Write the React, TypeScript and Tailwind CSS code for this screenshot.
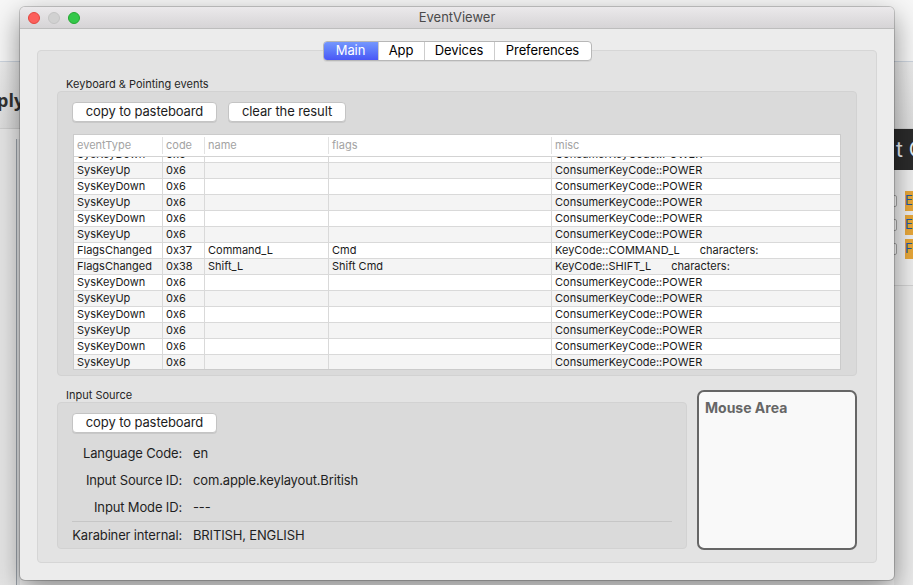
import { type ReactNode } from "react";

type EventRow = {
  code: string;
  eventType: string;
  flags: string;
  misc: string;
  miscExtra?: string;
  name: string;
};

const power = "ConsumerKeyCode::POWER";

const sysRow = (eventType: string): EventRow => ({
  code: "0x6",
  eventType,
  flags: "",
  misc: power,
  name: "",
});

const eventRows: EventRow[] = [
  sysRow("SysKeyDown"),
  sysRow("SysKeyUp"),
  sysRow("SysKeyDown"),
  sysRow("SysKeyUp"),
  sysRow("SysKeyDown"),
  sysRow("SysKeyUp"),
  {
    code: "0x37",
    eventType: "FlagsChanged",
    flags: "Cmd",
    misc: "KeyCode::COMMAND_L",
    miscExtra: "characters:",
    name: "Command_L",
  },
  {
    code: "0x38",
    eventType: "FlagsChanged",
    flags: "Shift Cmd",
    misc: "KeyCode::SHIFT_L",
    miscExtra: "characters:",
    name: "Shift_L",
  },
  sysRow("SysKeyDown"),
  sysRow("SysKeyUp"),
  sysRow("SysKeyDown"),
  sysRow("SysKeyUp"),
  sysRow("SysKeyDown"),
  sysRow("SysKeyUp"),
];

const tabs = ["Main", "App", "Devices", "Preferences"];
const tabWidths: Record<string, string> = {
  App: "w-[46px]",
  Devices: "w-[70px]",
  Main: "w-[54px]",
  Preferences: "w-[97px]",
};

export default function App() {
  return (
    <div className="relative h-[585px] w-[913px] overflow-hidden bg-[#f6f6f6] font-['Inter',sans-serif] text-[#1c1c1c]">
      <BackgroundPage />

      <div className="absolute top-[7px] left-[20px] flex h-[573px] w-[874px] flex-col overflow-hidden rounded-[5px] bg-[#ececec] shadow-[0_10px_28px_rgba(0,0,0,0.45),0_0_0_1px_rgba(0,0,0,0.18)]">
        <TitleBar />

        <div className="flex flex-1 flex-col px-[17px] pt-[12px] pb-[17px]">
          <div className="relative z-10 flex justify-center">
            <div className="flex h-[20px] overflow-hidden rounded-[4px] border border-[#b7b7b7] bg-white text-[13px] tracking-[-0.1px] shadow-[0_1px_0_rgba(0,0,0,0.06)]">
              {tabs.map((tab, index) => (
                <div
                  className={
                    index === 0
                      ? `${tabWidths[tab]} flex items-center justify-center bg-linear-to-b from-[#7597fd] to-[#4a56f6] text-white`
                      : `${tabWidths[tab]} flex items-center justify-center border-l border-[#cdcdcd] text-black`
                  }
                  key={tab}
                >
                  {tab}
                </div>
              ))}
            </div>
          </div>

          <div className="-mt-[11px] flex flex-1 flex-col rounded-[4px] border border-[#d6d6d6] bg-[#e3e3e3] px-[19px] pt-[26px] pb-[12px]">
            <GroupLabel>Keyboard &amp; Pointing events</GroupLabel>
            <div className="flex h-[285px] flex-col rounded-[4px] border border-[#d2d2d2] bg-[#dadada] px-[15px] pt-[10px]">
              <div className="-ml-px flex gap-[11px]">
                <MacButton width="w-[145px]">copy to pasteboard</MacButton>
                <MacButton width="w-[118px]">clear the result</MacButton>
              </div>
              <EventTable />
            </div>

            <div className="mt-[12px] flex gap-[10px]">
              <div className="flex w-[630px] flex-col">
                <GroupLabel>Input Source</GroupLabel>
                <div className="flex h-[147px] flex-col overflow-hidden rounded-[4px] border border-[#d2d2d2] bg-[#dadada] px-[14px] pt-[10px]">
                  <MacButton width="w-[145px]">copy to pasteboard</MacButton>
                  <div className="mt-[7px] flex flex-col text-[13px] tracking-[-0.15px]">
                    <InfoRow label="Language Code:" value="en" />
                    <InfoRow label="Input Source ID:" value="com.apple.keylayout.British" />
                    <InfoRow label="Input Mode ID:" value="---" />
                    <div className="h-px bg-[#c6c6c6]" />
                    <InfoRow label="Karabiner internal:" value="BRITISH, ENGLISH" tall />
                  </div>
                </div>
              </div>

              <div className="mt-[2px] h-[160px] w-[160px] rounded-[7px] border-2 border-[#666666] bg-[#f9f9f9] px-[6px] pt-[3px]">
                <span className="text-[14px] font-bold text-[#666666]">Mouse Area</span>
              </div>
            </div>
          </div>
        </div>
      </div>
    </div>
  );
}

function BackgroundPage() {
  return (
    <div className="flex h-full flex-col">
      <div className="h-[61px] bg-[#f7f7f7]" />
      <div className="h-px bg-[#cdd5df]" />
      <div className="flex h-[67px] items-center justify-between border-b border-[#cfcfcf] bg-linear-to-b from-[#ececec] to-[#dedede]">
        <span className="-ml-[3px] pt-[10px] font-['Open_Sans',sans-serif] text-[18px] font-bold text-[#333333]">
          ply
        </span>
      </div>
      <div className="flex flex-1">
        <div className="flex w-[20px] bg-linear-to-r from-[#e6e6e6] to-[#f0f0f0] pt-[10px]">
          <div className="ml-[16px] w-px bg-[#9ea5ad]" />
          <div className="flex-1 bg-[#e4e6e8]" />
        </div>
        <div className="flex-1" />
        <div className="flex w-[19px] flex-col bg-[#efefef]">
          <div className="flex h-[41px] items-center overflow-hidden bg-[#2b2b2b] pl-[2px] text-[21px] whitespace-nowrap text-[#e8eef5]">
            t C
          </div>
          <div className="flex h-[115px] flex-col gap-[10px] pt-[24px] text-[13px]">
            {["E", "E", "F"].map((letter, index) => (
              <div className="flex h-[14px] items-center whitespace-nowrap" key={index}>
                <span className="-ml-[5px] inline-block h-[12px] w-[8px] rounded-[2px] border border-[#a8a8a8] bg-white" />
                <span className="ml-[8px] bg-[#e9a83a] text-[#1e5aa8]">{letter}</span>
              </div>
            ))}
          </div>
          <div className="h-px bg-[#d4d4d4]" />
          <div className="flex-1 bg-[#ebebeb]" />
        </div>
      </div>
    </div>
  );
}

function TitleBar() {
  return (
    <div className="flex h-[22px] shrink-0 items-center border-b border-[#bdbdbd] bg-linear-to-b from-[#ebe9eb] to-[#d6d4d6] px-[8px]">
      <div className="flex gap-[8px]">
        <span className="size-[12px] rounded-full border border-[#e2463f] bg-[#fc605c]" />
        <span className="size-[12px] rounded-full border border-[#c4c4c4] bg-[#d1d1d1]" />
        <span className="size-[12px] rounded-full border border-[#24a732] bg-[#34c84a]" />
      </div>
      <div className="flex-1 pr-[52px] text-center text-[13px] text-[#4a4a4a]">
        EventViewer
      </div>
    </div>
  );
}

function GroupLabel({ children }: { children: ReactNode }) {
  return (
    <div className="h-[14px] pl-[9px] text-[11px] leading-[14px] text-[#262626]">
      {children}
    </div>
  );
}

function MacButton({ children, width }: { children: ReactNode; width: string }) {
  return (
    <div
      className={`${width} flex h-[20px] items-center justify-center rounded-[4px] border border-[#c4c4c4] bg-white text-[13px] tracking-[-0.1px] text-[#1c1c1c] shadow-[0_1px_0_rgba(0,0,0,0.08)]`}
    >
      {children}
    </div>
  );
}

function EventTable() {
  return (
    <div className="mt-[12px] flex h-[236px] flex-col overflow-hidden border border-[#cbcbcb] bg-white text-[11px]">
      <div className="flex h-[22px] shrink-0 border-b border-[#d3d3d3] text-[#a3a3a3]">
        <HeaderCell width="w-[89px]">eventType</HeaderCell>
        <HeaderCell width="w-[42px]">code</HeaderCell>
        <HeaderCell width="w-[124px]">name</HeaderCell>
        <HeaderCell width="w-[223px]">flags</HeaderCell>
        <HeaderCell width="flex-1" last>
          misc
        </HeaderCell>
      </div>
      <div className="flex-1 overflow-hidden">
        <div className="-mt-[11px] flex flex-col">
          {eventRows.map((row, index) => (
            <div
              className={
                index % 2 === 1
                  ? "flex h-[16px] border-t border-[#d9d9d9] bg-[#f4f4f4]"
                  : "flex h-[16px] border-t border-[#d9d9d9] bg-white"
              }
              key={index}
            >
              <BodyCell width="w-[89px]">{row.eventType}</BodyCell>
              <BodyCell width="w-[42px]">{row.code}</BodyCell>
              <BodyCell width="w-[124px]">{row.name}</BodyCell>
              <BodyCell width="w-[223px]">{row.flags}</BodyCell>
              <BodyCell width="flex-1" last>
                {row.misc}
                {row.miscExtra ? (
                  <span className="ml-[20px]">{row.miscExtra}</span>
                ) : null}
              </BodyCell>
            </div>
          ))}
        </div>
      </div>
    </div>
  );
}

function HeaderCell({
  children,
  last,
  width,
}: {
  children: ReactNode;
  last?: boolean;
  width: string;
}) {
  return (
    <div className={`${width} flex items-center py-[2px]`}>
      <div
        className={
          last
            ? "flex h-full flex-1 items-center pl-[3px]"
            : "flex h-full flex-1 items-center border-r border-[#e2e2e2] pl-[3px]"
        }
      >
        {children}
      </div>
    </div>
  );
}

function BodyCell({
  children,
  last,
  width,
}: {
  children?: ReactNode;
  last?: boolean;
  width: string;
}) {
  return (
    <div
      className={
        last
          ? `${width} flex items-center overflow-hidden pl-[3px] whitespace-nowrap text-[#1a1a1a]`
          : `${width} flex items-center overflow-hidden border-r border-[#d9d9d9] pl-[3px] whitespace-nowrap text-[#1a1a1a]`
      }
    >
      {children}
    </div>
  );
}

function InfoRow({
  label,
  tall,
  value,
}: {
  label: string;
  tall?: boolean;
  value: string;
}) {
  return (
    <div className={tall ? "flex h-[28px] items-center" : "flex h-[27px] items-center"}>
      <span className="flex w-[110px] shrink-0 justify-end whitespace-nowrap text-[#1f1f1f]">
        {label}
      </span>
      <span className="ml-[11px] whitespace-nowrap text-[#1f1f1f]">{value}</span>
    </div>
  );
}
